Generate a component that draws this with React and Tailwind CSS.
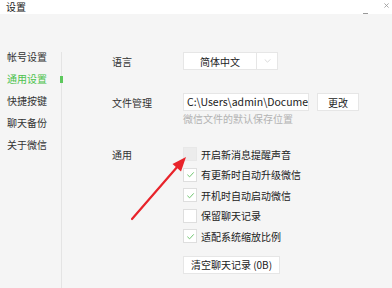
import React from 'react';

const NAV = ['帐号设置', '通用设置', '快捷按键', '聊天备份', '关于微信'];

const OPTIONS = [
  { label: '开启新消息提醒声音', checked: false, disabled: true },
  { label: '有更新时自动升级微信', checked: true },
  { label: '开机时自动启动微信', checked: true },
  { label: '保留聊天记录', checked: false },
  { label: '适配系统缩放比例', checked: true },
];

function Checkbox({ checked, disabled }) {
  return (
    <div
      className={`w-[14px] h-[14px] shrink-0 flex items-center justify-center border ${
        disabled ? 'bg-[#ececec] border-[#e8e8e8]' : 'bg-white border-[#dedede]'
      }`}
    >
      {checked && (
        <svg viewBox="0 0 10 10" className="w-[9px] h-[9px]" fill="none" stroke="#6cc36c" strokeWidth="1.1">
          <polyline points="1.5 5.2 4 7.6 8.6 2.6" />
        </svg>
      )}
    </div>
  );
}

export default function App() {
  return (
    <div
      className="relative w-[392px] h-[288px] overflow-hidden bg-[#f5f5f5] text-[#333] flex flex-col"
      style={{ fontFamily: '"Noto Sans CJK SC", "Noto Sans", sans-serif' }}
    >
      {/* title bar */}
      <div className="h-[14px] bg-white flex items-start justify-between shrink-0">
        <span className="pl-[6px] pt-px text-[10px] leading-[11px] text-[#222]">设置</span>
        <div className="flex items-start">
          <div className="w-[5px] h-px bg-[#999] mt-[13px] mr-[16px]" />
          <svg viewBox="0 0 6 6" className="w-[5px] h-[5px] mt-[3px] mr-[3px]" stroke="#999" strokeWidth="1">
            <line x1="0.5" y1="0.5" x2="5.5" y2="5.5" />
            <line x1="5.5" y1="0.5" x2="0.5" y2="5.5" />
          </svg>
        </div>
      </div>

      <div className="flex flex-1">
        {/* sidebar */}
        <div className="w-[61px] pt-[32px] pl-[7px]">
          {NAV.map((item, i) => (
            <div
              key={item}
              className={`h-[22px] leading-[22px] text-[10px] ${i === 1 ? 'text-[#4cc24c]' : 'text-[#333]'}`}
            >
              {item}
            </div>
          ))}
        </div>
        <div className="relative w-px bg-[#e4e4e4] mt-[38px]">
          <div className="absolute left-[-1px] top-[24px] w-[3px] h-[7px] bg-[#5cc85c]" />
        </div>

        {/* main */}
        <div className="flex-1 pl-[50px] pt-[38px]">
          <div className="flex items-center h-[18px]">
            <div className="w-[71px] text-[10px]">语言</div>
            <div className="flex w-[95px] h-[18px] bg-white border border-[#e6e6e6]">
              <div className="w-[73px] flex items-center justify-center text-[10px] text-[#222] border-r border-[#e6e6e6]">
                简体中文
              </div>
              <div className="flex-1 flex items-center justify-center">
                <svg viewBox="0 0 8 5" className="w-[7px] h-[4px]" fill="none" stroke="#c4c4c4" strokeWidth="0.8">
                  <polyline points="0.5 0.5 4 4 7.5 0.5" />
                </svg>
              </div>
            </div>
          </div>

          <div className="flex items-center h-[18px] mt-[23px]">
            <div className="w-[71px] text-[10px]">文件管理</div>
            <div className="w-[126px] h-[18px] bg-white border border-[#e6e6e6] overflow-hidden whitespace-nowrap pl-[3px] text-[10.5px] leading-[16px] text-[#222]">
              C:\Users\admin\Documen
            </div>
            <div className="ml-[8px] w-[42px] h-[18px] bg-white border border-[#e6e6e6] flex items-center justify-center text-[10px] text-[#222]">
              更改
            </div>
          </div>
          <div className="ml-[71px] mt-[2px] text-[10px] leading-[12px] text-[#b3b3b3]">微信文件的默认保存位置</div>

          <div className="flex mt-[19px]">
            <div className="w-[71px] h-[20.5px] flex items-center text-[10px]">通用</div>
            <div className="flex flex-col">
              {OPTIONS.map(o => (
                <div key={o.label} className="h-[20.5px] flex items-center gap-[4px]">
                  <Checkbox checked={o.checked} disabled={o.disabled} />
                  <span className="text-[10px] text-[#222]">{o.label}</span>
                </div>
              ))}
              <div className="mt-[9px] w-[97px] h-[18px] bg-white border border-[#e6e6e6] flex items-center justify-center text-[10px] text-[#222]">
                清空聊天记录 (0B)
              </div>
            </div>
          </div>
        </div>
      </div>

      {/* red annotation arrow */}
      <svg className="absolute left-0 top-0 pointer-events-none" width="392" height="288">
        <line x1="132" y1="219" x2="178" y2="166" stroke="#e8232a" strokeWidth="2.2" strokeLinecap="round" />
        <polygon points="186,157 181,171.5 172.5,164" fill="#e8232a" />
      </svg>
    </div>
  );
}
